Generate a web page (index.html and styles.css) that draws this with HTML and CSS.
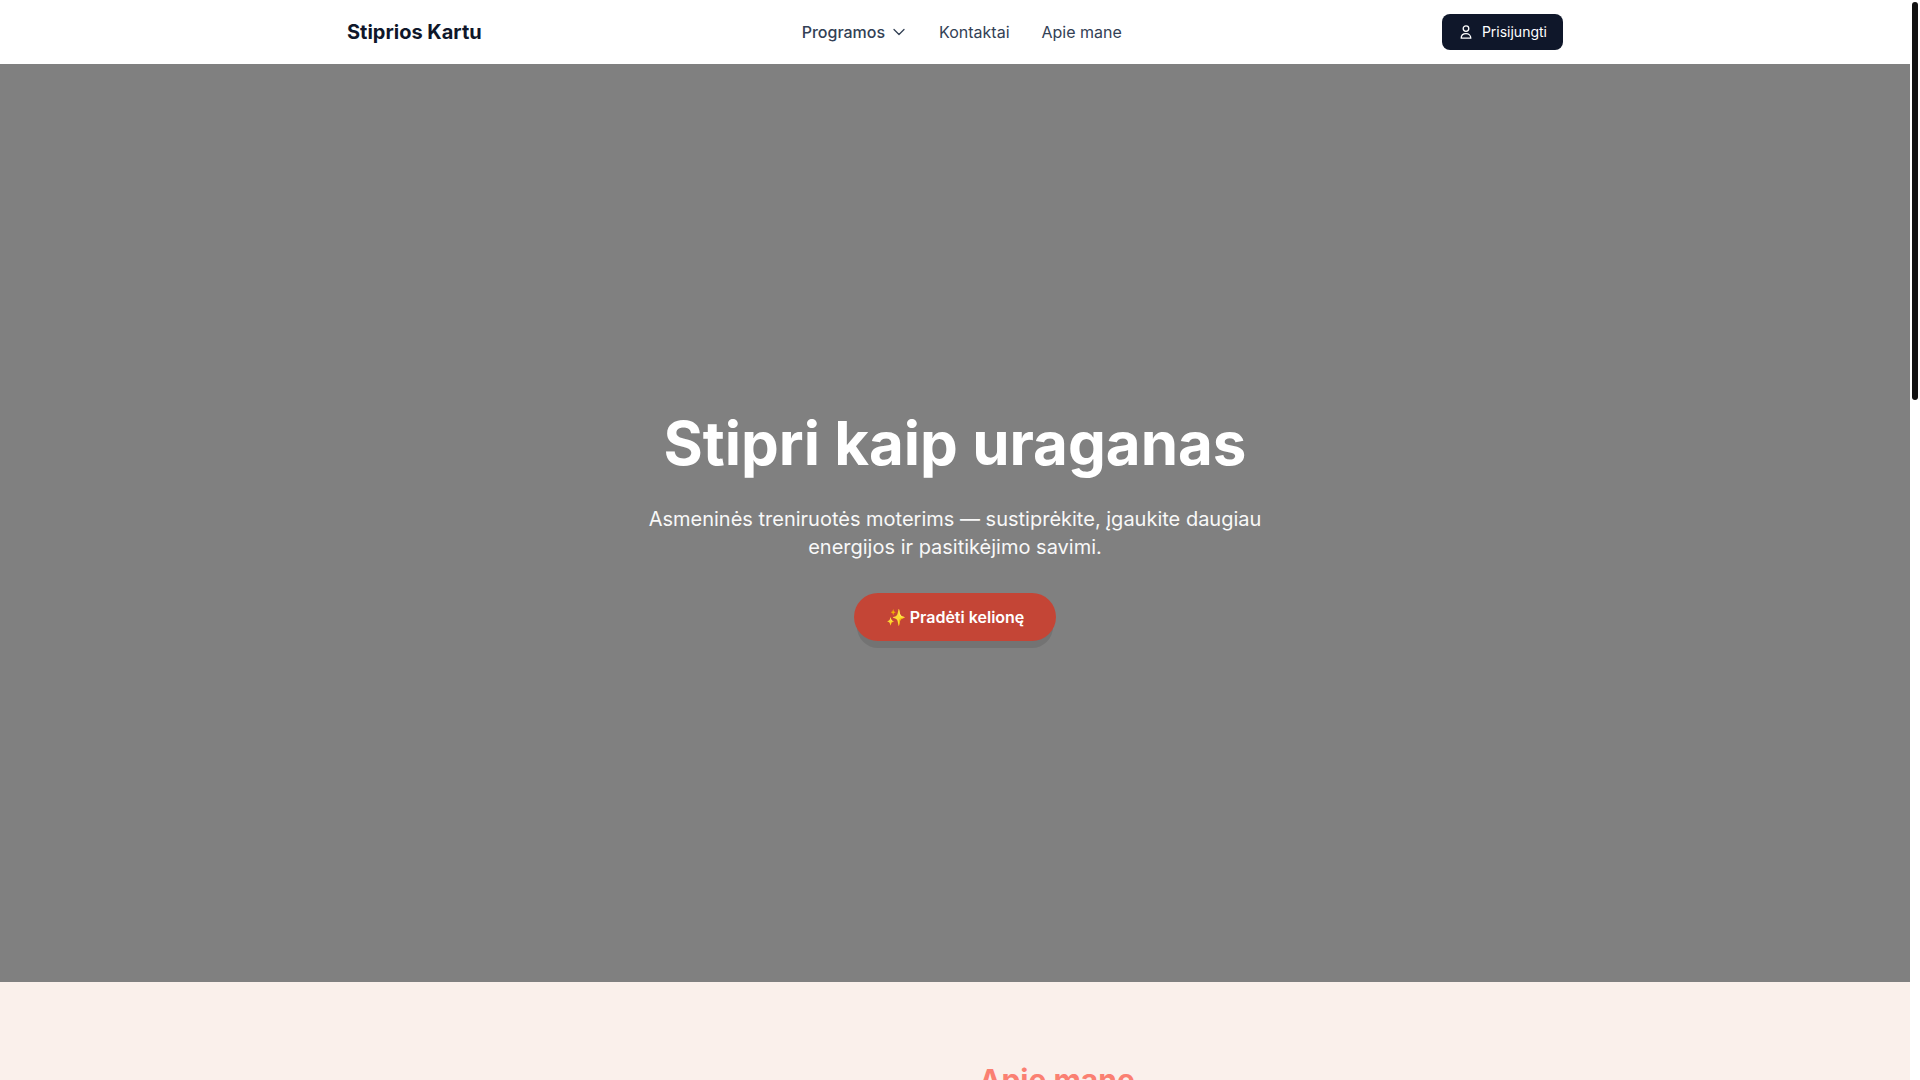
FILE: index.html
```html
<!DOCTYPE html>
<html lang="lt">
<head>
    <meta charset="UTF-8">
    <meta name="viewport" content="width=device-width, initial-scale=1.0">
    <title>Stiprios Kartu</title>
    <link rel="stylesheet" href="styles.css">
</head>
<body>

    <header class="site-header">
        <div class="container header-inner">
            <a class="logo" href="#">Stiprios Kartu</a>

            <nav class="main-nav">
                <button class="nav-toggle" type="button">
                    Programos
                    <svg width="16" height="16" viewBox="0 0 16 16" fill="none" stroke="currentColor" stroke-width="1.3" stroke-linecap="round" stroke-linejoin="round" aria-hidden="true">
                        <path d="M3 5.5l5 5 5-5"/>
                    </svg>
                </button>
                <a href="#kontaktai">Kontaktai</a>
                <a href="#apie">Apie mane</a>
            </nav>

            <button class="login-btn" type="button">
                <svg width="16" height="16" viewBox="0 0 16 16" fill="none" stroke="currentColor" stroke-width="1.3" stroke-linejoin="round" aria-hidden="true">
                    <circle cx="8" cy="4.6" r="2.8"/>
                    <path d="M3.2 14.2c0-2.8 2-4.6 4.8-4.6s4.8 1.8 4.8 4.6z"/>
                </svg>
                Prisijungti
            </button>
        </div>
    </header>

    <main>
        <section class="hero">
            <h1>Stipri kaip uraganas</h1>
            <p>Asmeninės treniruotės moterims — sustiprėkite, įgaukite daugiau energijos ir pasitikėjimo savimi.</p>
            <a class="cta" href="#programos">✨ Pradėti kelionę</a>
        </section>

        <section class="about" id="apie">
            <div class="container about-grid">
                <div class="about-photo"></div>
                <div class="about-text">
                    <h2>Apie mane</h2>
                </div>
            </div>
        </section>
    </main>

    <div class="scrollbar" aria-hidden="true">
        <div class="scrollbar-thumb"></div>
    </div>

</body>
</html>
```
FILE: styles.css
```css
* {
    box-sizing: border-box;
}
html {
    scrollbar-width: none;
}
body {
    margin: 0;
    padding-right: 10px;
    font-family: Inter, "Liberation Sans", sans-serif;
    font-size: 16px;
    line-height: 24px;
    color: #0f172a;
    background: #fff;
}
a {
    color: inherit;
    text-decoration: none;
}
button {
    font: inherit;
    border: none;
    cursor: pointer;
}
h1, h2, p {
    margin: 0;
}
.container {
    max-width: 1280px;
    margin: 0 auto;
    padding: 0 32px;
}

/* Header */
.site-header {
    position: sticky;
    top: 0;
    background: #fff;
}
.header-inner {
    display: flex;
    align-items: center;
    justify-content: space-between;
    height: 64px;
}
.logo {
    font-size: 20px;
    line-height: 28px;
    font-weight: 700;
}
.main-nav {
    display: flex;
    align-items: center;
    gap: 32px;
    color: #334155;
}
.nav-toggle {
    display: flex;
    align-items: center;
    gap: 6px;
    padding: 0;
    background: none;
    color: inherit;
    font-weight: 500;
}
.login-btn {
    display: flex;
    align-items: center;
    gap: 8px;
    padding: 8px 16px;
    border-radius: 8px;
    background: #0f172a;
    color: #fff;
    font-size: 14px;
    line-height: 20px;
}

/* Hero */
.hero {
    display: flex;
    flex-direction: column;
    align-items: center;
    justify-content: center;
    min-height: 85vh;
    padding: 0 24px;
    background: #808080;
    color: #fff;
    text-align: center;
}
.hero h1 {
    margin-bottom: 24px;
    font-size: 60px;
    line-height: 75px;
    font-weight: 700;
}
.hero p {
    max-width: 672px;
    margin-bottom: 32px;
    font-size: 20px;
    line-height: 28px;
    color: #f8f8f8;
}
.cta {
    padding: 12px 32px;
    border-radius: 24px;
    background: #c44536;
    font-weight: 600;
    box-shadow: 0 10px 0 -3px rgba(0, 0, 0, 0.1);
}

/* About */
.about {
    min-height: 1920px;
    padding: 80px 0;
    background: #faf0eb;
}
.about-grid {
    display: grid;
    grid-template-columns: 1fr 1fr;
    gap: 48px;
}
.about h2 {
    font-size: 30px;
    line-height: 36px;
    font-weight: 700;
    color: #fa8072;
}

/* Scrollbar */
.scrollbar {
    position: fixed;
    top: 0;
    right: 0;
    bottom: 0;
    width: 10px;
    padding: 2px;
    background: #fff;
}
.scrollbar-thumb {
    height: 37%;
    border-radius: 6px;
    background: #111;
}
```
